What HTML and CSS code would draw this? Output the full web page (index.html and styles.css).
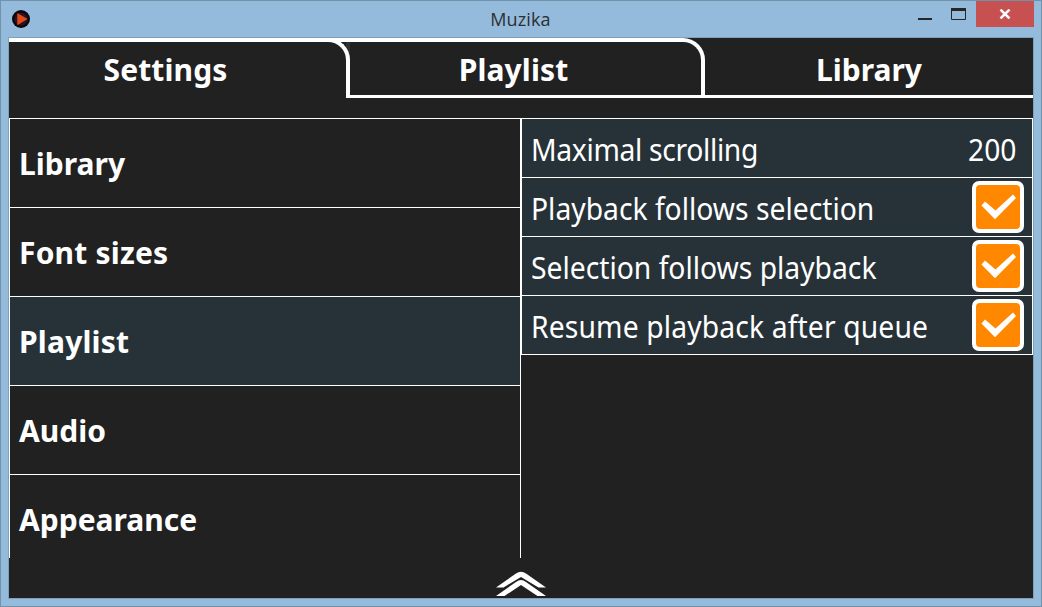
FILE: index.html
```html
<!DOCTYPE html>
<html lang="en">
<head>
<meta charset="utf-8">
<title>Muzika</title>
<link rel="stylesheet" href="styles.css">
</head>
<body>
<svg class="defs" width="0" height="0" aria-hidden="true">
  <symbol id="check" viewBox="0 0 52 52">
    <rect x="0" y="0" width="52" height="52" rx="7" fill="#fff"/>
    <rect x="4" y="4" width="44" height="44" rx="4" fill="#ff8800"/>
    <path d="M9.5 24.5L13 20.5L23.5 29.5L41 13.5L44 17L23 38.2Z" fill="#fff"/>
  </symbol>
</svg>
<div class="window">
  <header class="titlebar">
    <svg class="app-icon" viewBox="0 0 18 18"><circle cx="9" cy="9" r="9" fill="#09070b"/><circle cx="9" cy="9" r="6.6" fill="#2b1028"/><path d="M5.3 3L15.6 9L5.3 15.3Z" fill="#e04a14"/></svg>
    <h1 class="title">Muzika</h1>
    <div class="controls">
      <svg class="minmax" viewBox="0 0 58 26"><path d="M0 17h14v2H0z" fill="#262626"/><path d="M33.5 8.5h14v10h-14z" fill="none" stroke="#262626"/><path d="M33 7h15v3H33z" fill="#262626"/></svg>
      <div class="close"><svg viewBox="0 0 12 10"><path d="M1.5 .6L10.5 9.4M10.5 .6L1.5 9.4" stroke="#fff" stroke-width="2.5"/></svg></div>
    </div>
  </header>
  <main class="app">
    <nav class="tabs">
      <div class="tab settings">Settings</div>
      <div class="tab playlist">Playlist</div>
      <div class="tab library">Library</div>
    </nav>
    <div class="columns">
      <div class="menu">
        <div class="item">Library</div>
        <div class="item wide">Font sizes</div>
        <div class="item wide active">Playlist</div>
        <div class="item">Audio</div>
        <div class="item">Appearance</div>
      </div>
      <div class="options">
        <div class="option"><span class="name tight">Maximal scrolling</span><span class="value">200</span></div>
        <div class="option"><span class="name">Playback follows selection</span><svg class="check"><use href="#check"/></svg></div>
        <div class="option"><span class="name">Selection follows playback</span><svg class="check"><use href="#check"/></svg></div>
        <div class="option"><span class="name loose">Resume playback after queue</span><svg class="check"><use href="#check"/></svg></div>
      </div>
    </div>
    <footer class="drawer"><svg viewBox="0 0 50 26"><path d="M0 16.5L20 2.5Q25 -1 30 2.5L50 16.5H42.5L25 6L7.5 16.5ZM0 25L20 11Q25 7 30 11L50 25H41.5L25 14L8.5 25Z" fill="#fff"/></svg></footer>
  </main>
</div>
</body>
</html>
```
FILE: styles.css
```css
* { box-sizing: border-box; }
body { margin: 0; background: #94bbdb; color: #fff; font-family: "Noto Sans", sans-serif; }
.defs { position: absolute; }
.window { width: 1042px; height: 607px; border: 1px solid #7292ac; padding: 0 7px 7px; }
.titlebar { height: 36px; display: grid; grid-template-columns: 200px 1fr 200px; }
.app-icon { width: 18px; height: 18px; margin: 9px 0 0 4px; }
.title { margin: 5px 1px 0 0; font: 400 18px/26px "Open Sans", sans-serif; letter-spacing: .15px; text-align: center; color: #2b2f33; }
.controls { display: flex; justify-content: flex-end; }
.minmax { width: 58px; height: 26px; }
.close { width: 58px; height: 26px; background: #c75050; display: flex; justify-content: center; padding-top: 8px; }
.close svg { width: 12px; height: 10px; }
.app { height: 562px; border: 1px solid #7fa1bc; background: #212121; display: flex; flex-direction: column; }
.tabs { height: 60px; display: grid; grid-template-columns: 341px 355px 328px; background: linear-gradient(#303030, #303030) 337px 4px / 4px 14px no-repeat; }
.tab { height: 60px; text-align: center; font-weight: 700; font-size: 30px; line-height: 40px; padding-top: 12px; }
.settings, .playlist { border-top: 4px solid #fff; border-right: 4px solid #fff; border-radius: 0 22px 0 0; padding: 8px 24px 0 0; letter-spacing: .12px; }
/* Carries the top line over the rounded corner into the next tab. */
.settings { position: relative; }
.settings::after { content: ""; position: absolute; top: -4px; right: -4px; width: 24px; height: 4px; background: #fff; }
.playlist, .library { border-bottom: 3px solid #fff; }
.columns { height: 440px; margin-top: 20px; display: grid; grid-template-columns: 512px 512px; }
.menu { border: 1px solid #fff; border-bottom: 0; overflow: hidden; }
.item { height: 89px; border-bottom: 1px solid #fff; padding-left: 9px; font-size: 30px; font-weight: 700; line-height: 89px; white-space: nowrap; }
.item:last-child { border-bottom: 0; }
.wide { letter-spacing: .2px; }
.active, .option { background: #263238; }
.options { height: 237px; border: 1px solid #fff; border-bottom: 0; }
.option { height: 59px; border-bottom: 1px solid #fff; display: flex; justify-content: space-between; align-items: flex-start; padding: 3px 8px 0 9px; font-size: 30px; line-height: 55px; white-space: nowrap; }
.name { transform: scaleX(.942); transform-origin: left; }
.tight { letter-spacing: -.35px; }
.loose { letter-spacing: .15px; }
.value { margin-right: 8px; transform: scaleX(.94); transform-origin: right; }
.check { width: 52px; height: 52px; }
.drawer { flex: 1; display: flex; justify-content: center; padding-top: 13px; }
.drawer svg { width: 50px; height: 26px; }
```
